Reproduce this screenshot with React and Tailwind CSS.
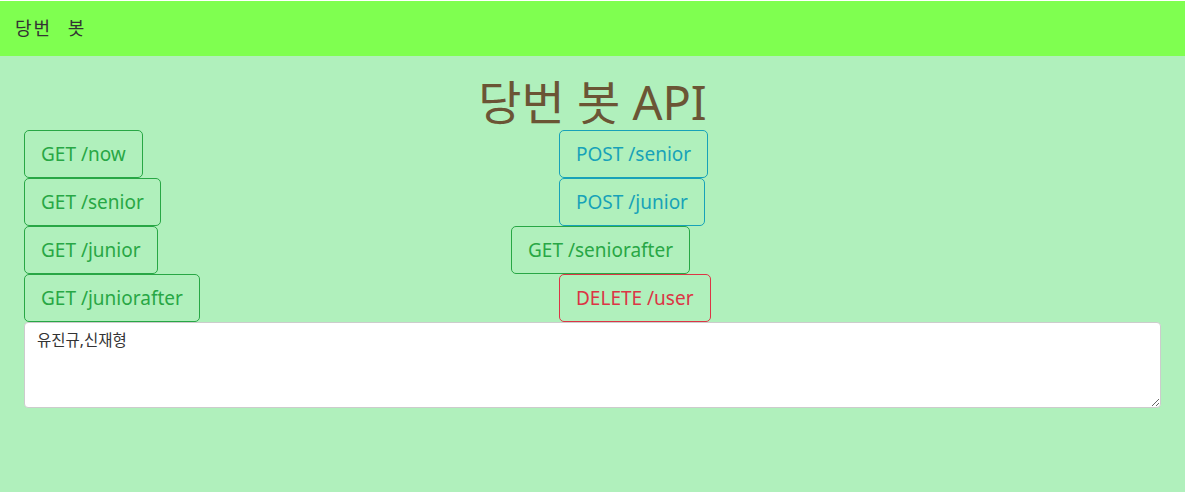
import React, { useState } from 'react';

const kr = { fontFamily: '"Noto Sans", "Noto Sans CJK KR", sans-serif' };

const leftButtons = [
  { label: 'GET /now', tone: 'success' },
  { label: 'GET /senior', tone: 'success' },
  { label: 'GET /junior', tone: 'success' },
  { label: 'GET /juniorafter', tone: 'success' },
];

const rightButtons = [
  { label: 'POST /senior', tone: 'info', shift: true },
  { label: 'POST /junior', tone: 'info', shift: true },
  { label: 'GET /seniorafter', tone: 'success', shift: false },
  { label: 'DELETE /user', tone: 'danger', shift: true },
];

const toneClass = {
  success: 'border-[#28a745] text-[#28a745]',
  info: 'border-[#17a2b8] text-[#17a2b8]',
  danger: 'border-[#dc3545] text-[#dc3545]',
};

const ApiButton = ({ label, tone, className = '' }) => (
  <button
    className={`h-12 px-4 border rounded-[5px] bg-transparent text-[19px] leading-none flex items-center ${toneClass[tone]} ${className}`}
  >
    {label}
  </button>
);

const App = () => {
  const [names, setNames] = useState('유진규,신재형');

  return (
    <div className="w-[1185px] h-[499px] bg-white pt-px" style={kr}>
      <nav className="h-[55px] bg-[#7fff50] flex items-center px-[15px]">
        <span className="text-[18px] text-[#333] tracking-[2px] [word-spacing:9px]">당번 봇</span>
      </nav>

      <main className="h-[436px] bg-[#b0f0bc] px-6">
        <h1 className="text-center text-[47px] leading-[56px] pt-[18px] text-[#6b5535]">당번 봇 API</h1>

        <div className="flex">
          <div className="w-[487px] flex flex-col items-start">
            {leftButtons.map((b) => (
              <ApiButton key={b.label} {...b} />
            ))}
          </div>
          <div className="flex flex-col items-start">
            {rightButtons.map((b) => (
              <ApiButton key={b.label} label={b.label} tone={b.tone} className={b.shift ? 'ml-12' : ''} />
            ))}
          </div>
        </div>

        <textarea
          value={names}
          onChange={(e) => setNames(e.target.value)}
          className="block w-full h-[86px] bg-white border border-[#ccc] rounded-[4px] px-3 py-[6px] text-[15.5px] text-[#333] outline-none resize-y"
        />
      </main>
    </div>
  );
};

export default App;
